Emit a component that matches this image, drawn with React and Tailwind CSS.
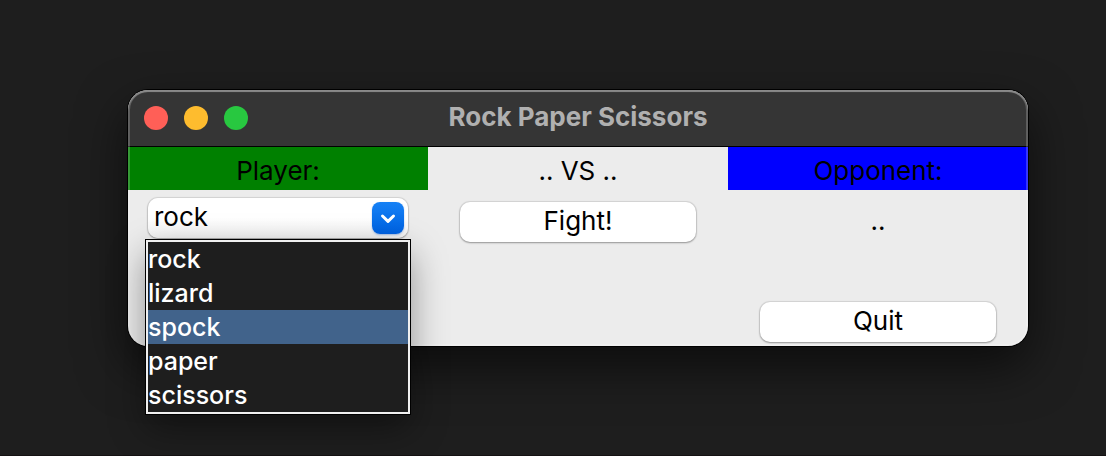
import { useState } from "react";

const MOVES = ["rock", "lizard", "spock", "paper", "scissors"];

function TitleBar({ title }) {
  return (
    <header className="grid h-[57px] grid-cols-[1fr_auto_1fr] items-center rounded-t-[20px] border-b border-black bg-[#353535] px-4">
      <div className="flex gap-4">
        <button type="button" aria-label="Close" className="size-6 rounded-full bg-[#ff5f57]" />
        <button type="button" aria-label="Minimize" className="size-6 rounded-full bg-[#febc2e]" />
        <button type="button" aria-label="Zoom" className="size-6 rounded-full bg-[#28c840]" />
      </div>
      <h1 className="pb-0.5 text-[26px] leading-8 font-bold text-[#b0b0b0]">{title}</h1>
    </header>
  );
}

function PushButton({ children }) {
  return (
    <button
      type="button"
      className="block h-10 w-full rounded-[10px] bg-white pb-0.5 leading-8 shadow-[0_0_1px_1px_rgba(0,0,0,0.1),0_1px_2px_rgba(0,0,0,0.3)]"
    >
      {children}
    </button>
  );
}

function MovePicker() {
  const [value, setValue] = useState("rock");
  const [active, setActive] = useState("spock");

  return (
    <div className="relative">
      <select
        id="player-move"
        value={value}
        onChange={(e) => setValue(e.target.value)}
        className="block h-10 w-full appearance-none rounded-[10px] bg-linear-to-b from-white from-50% to-[#f1f1f1] pr-10 pb-0.5 pl-1.5 leading-8 shadow-[0_0_1px_1px_rgba(0,0,0,0.1),0_1px_2px_rgba(0,0,0,0.3)] outline-none"
      >
        {MOVES.map((move) => (
          <option key={move}>{move}</option>
        ))}
      </select>
      <span className="pointer-events-none absolute top-1 right-1 size-8 rounded-lg bg-linear-to-b from-[#1681f5] to-[#0062e3] shadow-[0_1px_2px_rgba(0,80,200,0.35)]">
        <svg viewBox="0 0 32 32" className="size-8" fill="none" stroke="white" strokeWidth="3" strokeLinecap="round" strokeLinejoin="round" aria-hidden="true">
          <path d="M10.5 14 L16 19.3 L21.5 14" />
        </svg>
      </span>
      <ul
        role="listbox"
        aria-label="Moves"
        className="absolute top-[42px] -right-0.5 -left-0.5 z-10 border-2 border-[#f0f0f0] bg-[#1e1e1e] text-[25px] font-medium text-white shadow-[0_0_0_1px_#000,0_14px_34px_rgba(0,0,0,0.4)]"
      >
        {MOVES.map((move) => (
          <li
            key={move}
            role="option"
            aria-selected={move === active}
            onMouseEnter={() => setActive(move)}
            onClick={() => setValue(move)}
            className={move === active ? "h-[34px] bg-[#41638b] leading-[34px]" : "h-[34px] leading-[34px]"}
          >
            {move}
          </li>
        ))}
      </ul>
    </div>
  );
}

export default function App() {
  return (
    <div className="min-h-screen border-b border-[#151213] bg-[#1e1e1e] pt-[90px] pr-[78px] pb-12 pl-32 font-['Inter','Liberation_Sans',sans-serif] text-[26px] text-black">
      <main className="relative rounded-[20px] bg-[#ececec] shadow-[0_0_0_1px_#000,0_20px_50px_rgba(0,0,0,0.6)]">
        <TitleBar title="Rock Paper Scissors" />
        <div className="grid grid-cols-3 text-center leading-8">
          <label htmlFor="player-move" className="bg-[#008000] pt-2 pb-[3px]">Player:</label>
          <p className="pt-2 pb-[3px]">.. VS ..</p>
          <p className="bg-[#0000ff] pt-2 pb-[3px]">Opponent:</p>
        </div>
        <div className="grid grid-cols-3 pb-1">
          <div className="px-5 pt-2">
            <MovePicker />
          </div>
          <div className="px-8 pt-3">
            <PushButton>Fight!</PushButton>
          </div>
          <div className="px-8 pt-[15px] text-center leading-8">..</div>
          <div className="col-start-3 px-8 pt-[60px]">
            <PushButton>Quit</PushButton>
          </div>
        </div>
        <div className="pointer-events-none absolute inset-0 rounded-[20px] shadow-[inset_0_2px_1px_rgba(255,255,255,0.28),inset_0_0_0_2px_rgba(255,255,255,0.2)]" />
      </main>
    </div>
  );
}
